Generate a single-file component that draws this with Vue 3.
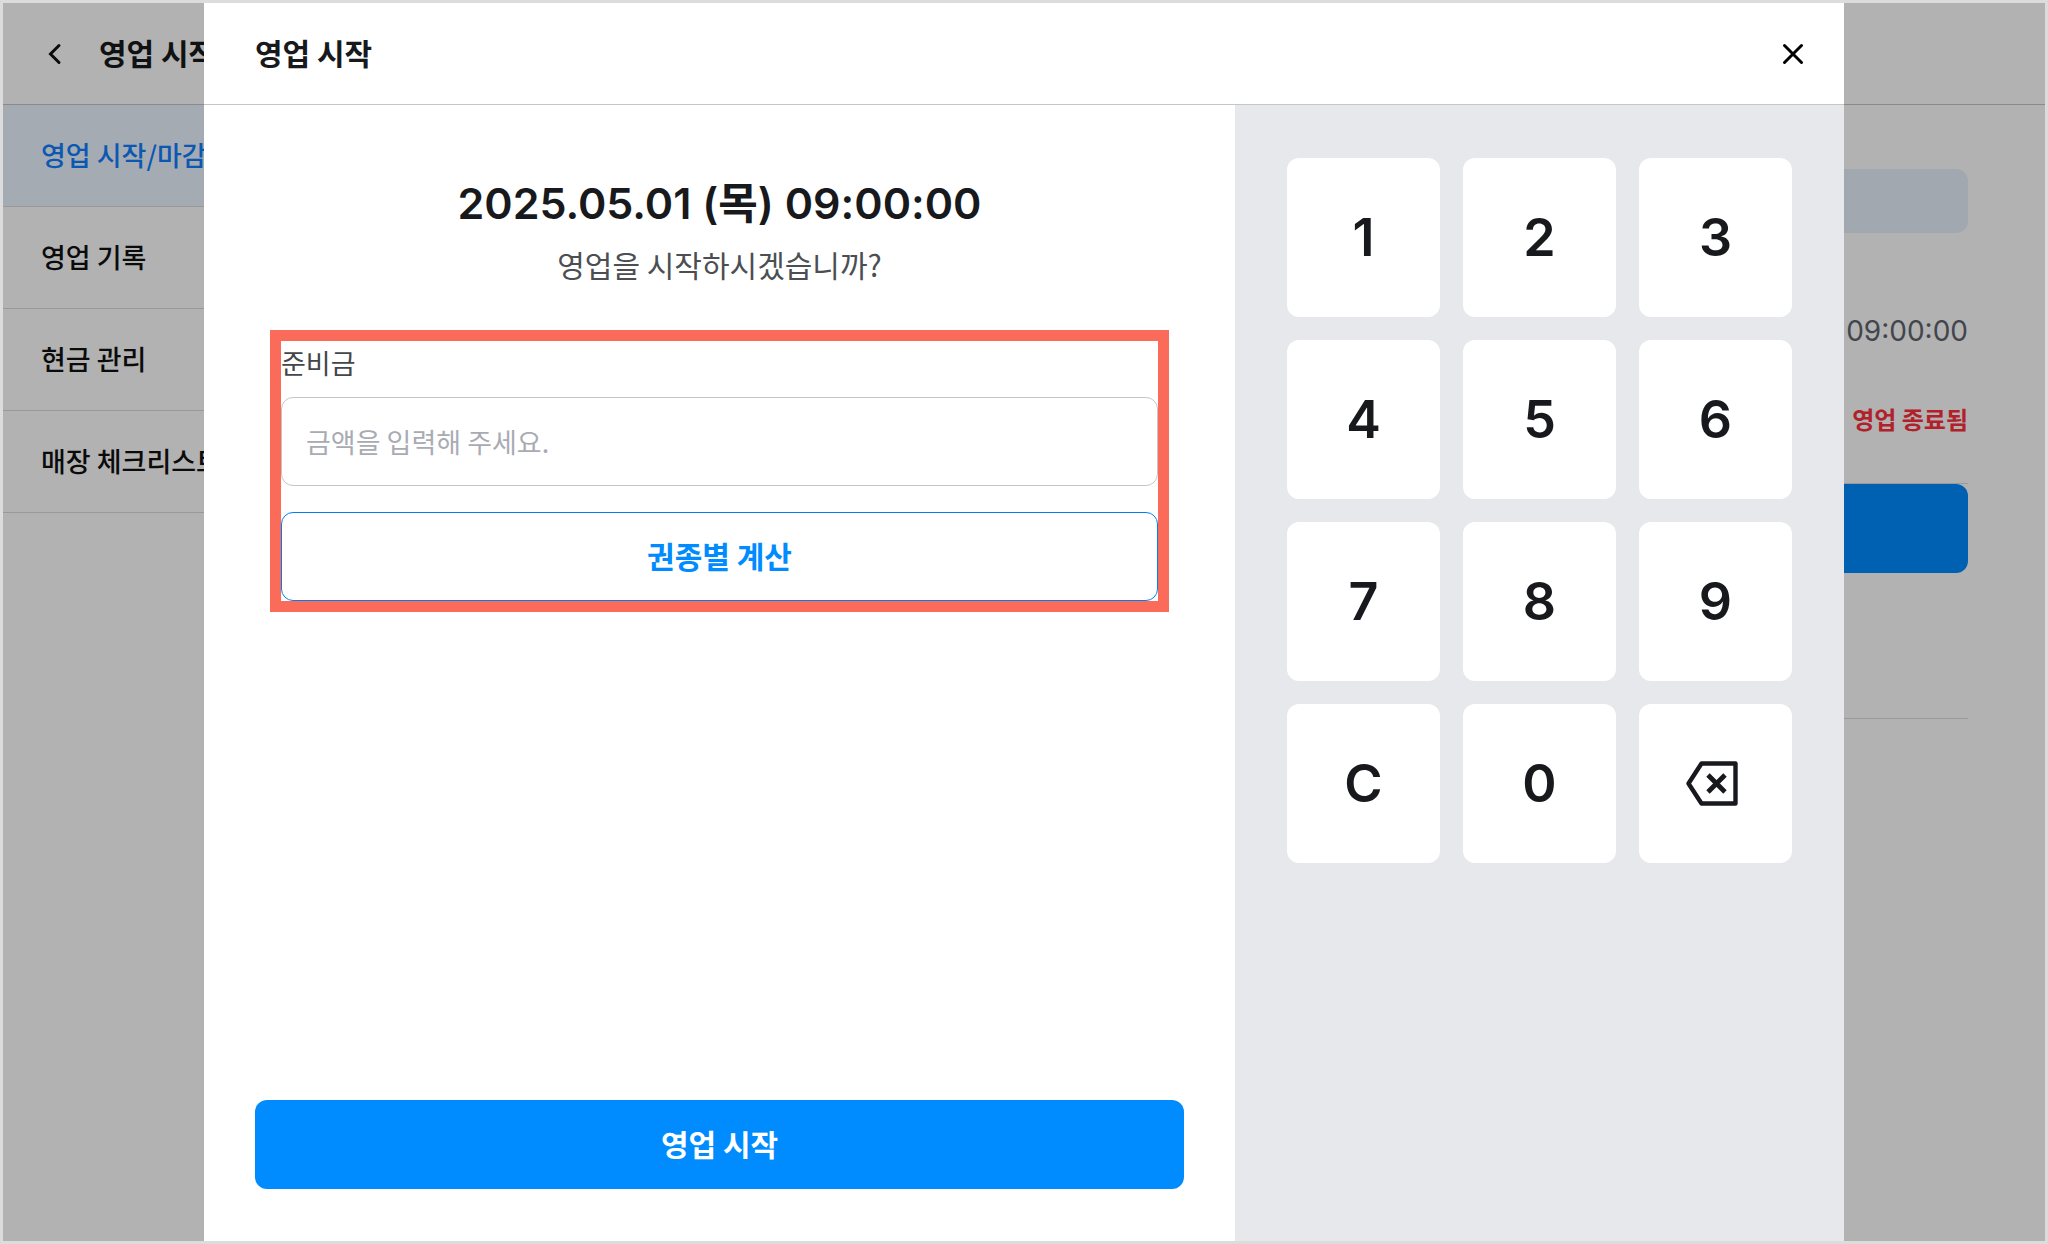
<script setup>
import { ref } from 'vue'

const menu = ['영업 시작/마감', '영업 기록', '현금 관리', '매장 체크리스트']
const keys = ['1', '2', '3', '4', '5', '6', '7', '8', '9', 'C', '0']
const amount = ref('')

function press(key) {
  amount.value = key === 'C' ? '' : amount.value + key
}

function erase() {
  amount.value = amount.value.slice(0, -1)
}
</script>

<template>
  <div class="frame">
    <div class="page">
      <header class="bar page-bar">
        <button class="icon-button" type="button" aria-label="뒤로">
          <svg width="24" height="24" viewBox="0 0 24 24" fill="none" stroke="#111" stroke-width="3">
            <path d="M17 3.5L8.5 12L17 20.5" stroke-linecap="round" />
          </svg>
        </button>
        <h1 class="title">영업 시작</h1>
      </header>
      <div class="page-body">
        <nav class="menu">
          <a v-for="(item, i) in menu" :key="item" href="#" class="menu-item" :class="{ active: i === 0 }">{{ item }}</a>
        </nav>
        <main class="content">
          <div class="chip"></div>
          <div class="summary">
            <p class="time">09:00:00</p>
            <p class="status">영업 종료됨</p>
          </div>
          <div class="action"></div>
        </main>
      </div>
    </div>

    <div class="overlay">
      <section class="modal" role="dialog" aria-labelledby="modal-title">
        <header class="bar modal-bar">
          <h2 id="modal-title" class="title">영업 시작</h2>
          <button class="icon-button" type="button" aria-label="닫기">
            <svg width="24" height="24" viewBox="0 0 24 24" fill="none" stroke="#000" stroke-width="3">
              <path d="M3.5 3.5L20.5 20.5M20.5 3.5L3.5 20.5" stroke-linecap="round" />
            </svg>
          </button>
        </header>
        <div class="modal-body">
          <div class="form">
            <p class="date">2025.05.01 (목) 09:00:00</p>
            <p class="question">영업을 시작하시겠습니까?</p>
            <div class="cash">
              <label class="label" for="cash-amount">준비금</label>
              <input id="cash-amount" v-model="amount" class="input" type="text" placeholder="금액을 입력해 주세요." />
              <button class="button outline" type="button">권종별 계산</button>
            </div>
            <button class="button primary" type="button">영업 시작</button>
          </div>
          <div class="keypad">
            <button v-for="key in keys" :key="key" class="key" type="button" @click="press(key)">{{ key }}</button>
            <button class="key" type="button" aria-label="지우기" @click="erase">
              <svg width="60" height="56" viewBox="0 0 60 56" fill="none" stroke="#17191c">
                <path d="M15.5 7.5H49.5V47.5H15.5L2.5 27.5Z" stroke-width="4.4" stroke-linejoin="round" />
                <path d="M22 19L39 36M39 19L22 36" stroke-width="4.8" />
              </svg>
            </button>
          </div>
        </div>
      </section>
    </div>
  </div>
</template>

<style>
body {
  margin: 0;
}
</style>

<style scoped>
* {
  box-sizing: border-box;
}

.frame {
  display: grid;
  min-height: 100vh;
  border: 3px solid #dcdcdc;
  overflow: hidden;
  color: #17191c;
  font-family: "Noto Sans CJK KR", sans-serif;
}

.page,
.overlay {
  grid-area: 1 / 1;
  min-width: 0;
}

h1,
h2,
p {
  margin: 0;
}

button {
  padding: 0;
  border: 0;
  background: none;
  color: inherit;
  font-family: inherit;
  cursor: pointer;
}

.bar {
  display: flex;
  align-items: center;
  height: 102px;
  border-bottom: 1px solid #c6c6c6;
}

.title {
  padding-bottom: 4px;
  font-size: 30px;
  font-weight: 700;
  line-height: 44px;
  white-space: nowrap;
}

.icon-button {
  display: flex;
}

.page {
  background: #fff;
}

.page-bar {
  gap: 33px;
  padding: 0 39px;
}

.page-body {
  display: flex;
}

.menu {
  display: flex;
  flex: none;
  flex-direction: column;
  width: 400px;
}

.menu-item {
  padding: 30px 38px 31px;
  border-bottom: 1px solid #dcdcdc;
  color: #111;
  font-size: 27px;
  font-weight: 500;
  line-height: 40px;
  text-decoration: none;
}

.menu-item.active {
  background: #edf5ff;
  color: #0f7fff;
}

.content {
  flex: 1;
  margin: 0 77px 0 80px;
  padding: 64px 0 145px;
  border-bottom: 1px solid #dcdcdc;
}

.chip {
  height: 64px;
  border-radius: 12px;
  background: #e9f1fd;
}

.summary {
  margin-top: 54px;
  padding-bottom: 20px;
  border-bottom: 1px solid #dcdcdc;
  line-height: 88px;
  text-align: right;
}

.time {
  color: #5f656d;
  font-family: Inter, sans-serif;
  font-size: 28px;
}

.status {
  color: #fe3040;
  font-size: 24px;
  font-weight: 700;
}

.action {
  height: 89px;
  border-radius: 12px;
  background: #008cff;
}

.overlay {
  display: flex;
  padding: 0 201px;
  background: rgba(0, 0, 0, 0.3);
}

.modal {
  display: flex;
  flex: 1;
  flex-direction: column;
  background: #fff;
}

.modal-bar {
  justify-content: space-between;
  padding: 0 39px 0 51px;
}

.modal-body {
  display: flex;
  flex: 1;
}

.form {
  display: flex;
  flex: 1;
  flex-direction: column;
  padding: 68px 51px 52px;
}

.date {
  font-family: Inter, "Noto Sans CJK KR", sans-serif;
  font-size: 43px;
  font-weight: 600;
  line-height: 60px;
  text-align: center;
}

.question {
  margin-top: 11px;
  color: #4b4e52;
  font-size: 30px;
  font-weight: 400;
  line-height: 40px;
  text-align: center;
}

.cash {
  display: flex;
  flex-direction: column;
  margin: 46px 15px;
  border: 11px solid #fa6b59;
}

.label {
  margin-bottom: 12px;
  color: #43464a;
  font-size: 27px;
  line-height: 44px;
}

.input {
  width: 100%;
  height: 89px;
  margin-bottom: 26px;
  padding: 0 24px;
  border: 1px solid #c6c6c6;
  border-radius: 12px;
  background: #fff;
  color: inherit;
  font-family: inherit;
  font-size: 27px;
}

.input::placeholder {
  color: #a9abb3;
}

.button {
  height: 89px;
  padding-bottom: 4px;
  border-radius: 12px;
  font-size: 30px;
  font-weight: 700;
}

.outline {
  border: 1px solid #0080f0;
  background: #fff;
  color: #008cff;
}

.primary {
  margin-top: auto;
  background: #008cff;
  color: #fff;
}

.keypad {
  display: grid;
  flex: none;
  grid-template-columns: repeat(3, 153px);
  grid-auto-rows: 159px;
  gap: 23px;
  padding: 53px 52px;
  background: #e7e8ec;
}

.key {
  display: flex;
  align-items: center;
  justify-content: center;
  border-radius: 12px;
  background: #fff;
  font-family: Inter, sans-serif;
  font-size: 52px;
  font-weight: 600;
}
</style>
